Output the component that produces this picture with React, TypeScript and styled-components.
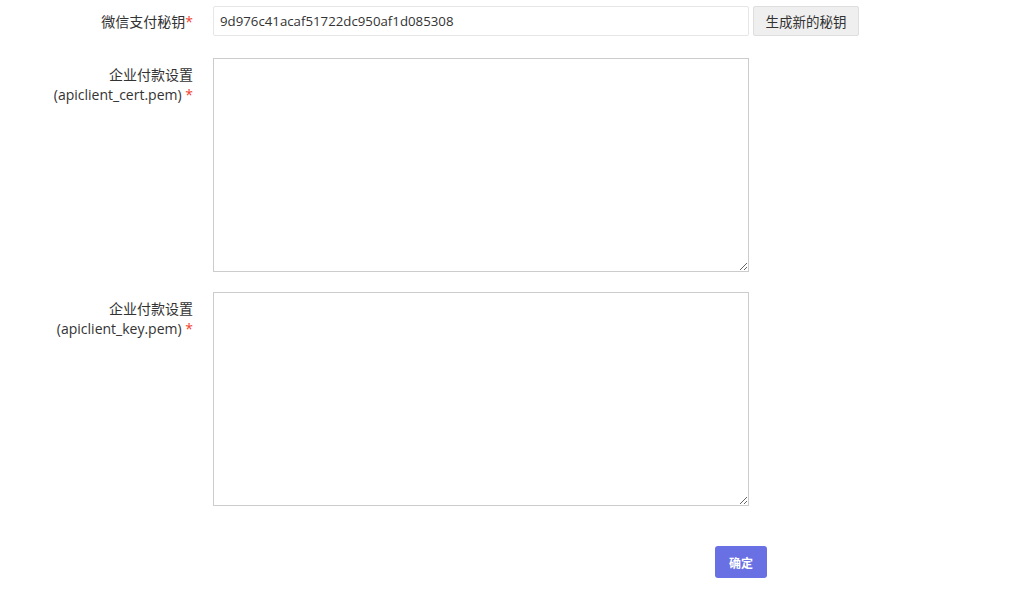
import React, { useState } from 'react';
import styled, { createGlobalStyle } from 'styled-components';

const GlobalStyle = createGlobalStyle`
  html, body {
    margin: 0;
    padding: 0;
    background: #fff;
  }
  body {
    font-family: 'Open Sans', 'Noto Sans CJK SC', sans-serif;
    color: #333;
  }
`;

const fields = [
  { title: '企业付款设置', sub: '(apiclient_cert.pem)' },
  { title: '企业付款设置', sub: '(apiclient_key.pem)' },
];

export default function App() {
  const [secret, setSecret] = useState('9d976c41acaf51722dc950af1d085308');

  const regenerate = () => {
    const chars = '0123456789abcdef';
    let s = '';
    for (let i = 0; i < 32; i++) s += chars[Math.floor(Math.random() * 16)];
    setSecret(s);
  };

  return (
    <>
      <GlobalStyle />
      <Form onSubmit={(e) => e.preventDefault()}>
        <Row $first>
          <Label $single>
            微信支付秘钥<Star>*</Star>
          </Label>
          <Control>
            <TextInput value={secret} onChange={(e) => setSecret(e.target.value)} />
            <GhostButton type='button' onClick={regenerate}>
              生成新的秘钥
            </GhostButton>
          </Control>
        </Row>
        {fields.map((f, i) => (
          <Row key={i}>
            <Label>
              {f.title}
              <br />
              {f.sub} <Star>*</Star>
            </Label>
            <Control>
              <TextArea />
            </Control>
          </Row>
        ))}
        <Footer>
          <SubmitButton type='submit'>确定</SubmitButton>
        </Footer>
      </Form>
    </>
  );
}

const Form = styled.form`
  display: flex;
  flex-direction: column;
  gap: 20px;
  padding-top: 6px;
`;

const Row = styled.div<{ $first?: boolean }>`
  display: flex;
  align-items: flex-start;
  gap: 20px;
  margin-bottom: ${(p) => (p.$first ? '2px' : '0')};
`;

const Label = styled.label<{ $single?: boolean }>`
  width: 193px;
  flex-shrink: 0;
  text-align: right;
  font-size: 14px;
  line-height: 20px;
  color: #333;
  padding-top: ${(p) => (p.$single ? '6px' : '7px')};
`;

const Star = styled.span`
  color: #f0412b;
`;

const Control = styled.div`
  display: flex;
  gap: 4px;
`;

const TextInput = styled.input`
  box-sizing: border-box;
  width: 536px;
  height: 30px;
  padding: 0 6px;
  border: 1px solid #e6e6e6;
  border-radius: 2px;
  font-family: 'Open Sans', sans-serif;
  font-size: 13.25px;
  color: #333;
  outline: none;
`;

const GhostButton = styled.button`
  box-sizing: border-box;
  width: 106px;
  height: 30px;
  padding: 0;
  border: 1px solid #dedede;
  border-radius: 2px;
  background: #efefef;
  font-family: 'Noto Sans CJK SC', sans-serif;
  font-size: 13.5px;
  color: #333;
  cursor: pointer;
`;

const TextArea = styled.textarea`
  box-sizing: border-box;
  width: 536px;
  height: 214px;
  border: 1px solid #cccccc;
  border-radius: 0;
  padding: 6px;
  font-family: 'Open Sans', sans-serif;
  font-size: 13px;
  outline: none;
`;

const Footer = styled.div`
  display: flex;
  padding-left: 715px;
  margin-top: 20px;
`;

const SubmitButton = styled.button`
  width: 52px;
  height: 32px;
  border: none;
  border-radius: 3px;
  background: #6970e4;
  color: #fff;
  font-family: 'Noto Sans CJK SC', sans-serif;
  font-size: 12px;
  font-weight: 700;
  cursor: pointer;
`;
